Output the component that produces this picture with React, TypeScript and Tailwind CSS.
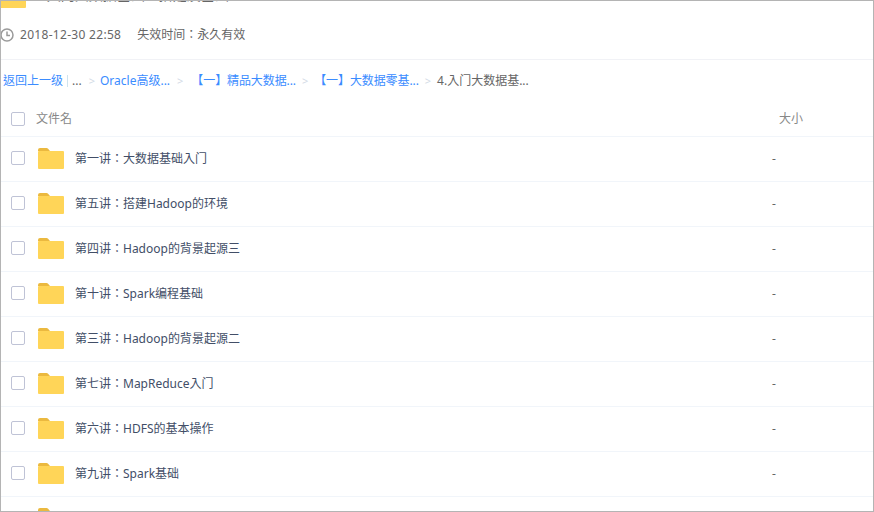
const rows = [
  '第一讲：大数据基础入门',
  '第五讲：搭建Hadoop的环境',
  '第四讲：Hadoop的背景起源三',
  '第十讲：Spark编程基础',
  '第三讲：Hadoop的背景起源二',
  '第七讲：MapReduce入门',
  '第六讲：HDFS的基本操作',
  '第九讲：Spark基础',
  '第八讲：Spark Streaming',
]

const font = { fontFamily: '"Noto Sans", "Noto Sans CJK TC", sans-serif' }

const Folder = ({ className }: { className: string }) => (
  <svg viewBox="0 0 26 21" className={className}>
    <path d="M0 2a2 2 0 0 1 2-2h6.5a2 2 0 0 1 1.6.8L12 3H0z" fill="#ebb93f" />
    <path d="M0 4a1 1 0 0 1 1-1h24a1 1 0 0 1 1 1v16a1 1 0 0 1-1 1H1a1 1 0 0 1-1-1z" fill="#ffd558" />
  </svg>
)

const Check = () => <div className="w-[14px] h-[14px] shrink-0 rounded-[2px] border border-[#bfc3d6] bg-white" />

const Sep = ({ className = '' }: { className?: string }) => (
  <span className={`text-[#d3dbe6] text-[11px] ${className}`}>&gt;</span>
)

export default function App() {
  return (
    <div style={font} className="w-[874px] h-[512px] overflow-hidden bg-white border border-[#b4b4b4] text-[12px] leading-[16px]">
      <div className="-mt-[14px] h-[21px] flex items-start">
        <Folder className="w-[26px] h-[21px] shrink-0 -ml-px" />
        <span className="ml-[9px] -mt-[2px] text-[14px] leading-[20px] text-[#666] whitespace-nowrap">4.入门大数据基础，搭建及基础理</span>
      </div>
      <div className="h-[52px] pt-[2px] flex items-center border-b border-[#f1f2f6] text-[#666]">
        <svg viewBox="0 0 14 14" className="w-[14px] h-[14px] -ml-px" fill="none" stroke="#9a9a9a" strokeWidth="1.5">
          <circle cx="7" cy="7" r="6" />
          <path d="M7 3.5V7.5H10" />
        </svg>
        <span className="ml-[6px] tracking-[0.3px]">2018-12-30 22:58</span>
        <span className="ml-[16px]">失效时间：永久有效</span>
      </div>
      <div className="h-[40px] pt-[2px] flex items-center text-[#3b8cff] whitespace-nowrap">
        <span className="ml-[2px]">返回上一级</span>
        <span className="ml-[4px] h-[12px] w-px bg-[#cfe3ee]" />
        <span className="ml-[4px] text-[#666]">...</span>
        <Sep className="ml-[7px]" />
        <span className="ml-[5px]">Oracle高级...</span>
        <Sep className="ml-[7px]" />
        <span className="ml-[8px] tracking-[-0.1px]">【一】精品大数据...</span>
        <Sep className="ml-[6px]" />
        <span className="ml-[6px] tracking-[-0.1px]">【一】大数据零基...</span>
        <Sep className="ml-[6px]" />
        <span className="ml-[6px] text-[#666]">4.入门大数据基...</span>
      </div>
      <div className="h-[37px] pt-[2px] flex items-center border-b border-[#f1f5fa] text-[#888]">
        <div className="ml-[10px]"><Check /></div>
        <span className="ml-[11px] flex-1">文件名</span>
        <span className="mr-[70px]">大小</span>
      </div>
      {rows.map(name => (
        <div key={name} className="h-[45px] flex items-center border-b border-[#f1f5fa] text-[#424e67]">
          <div className="ml-[10px] -mt-[2px]"><Check /></div>
          <Folder className="ml-[13px] -mt-[2px] w-[26px] h-[21px] shrink-0" />
          <span className="ml-[11px] flex-1">{name}</span>
          <span className="w-[101px] text-[#666]">-</span>
        </div>
      ))}
    </div>
  )
}
